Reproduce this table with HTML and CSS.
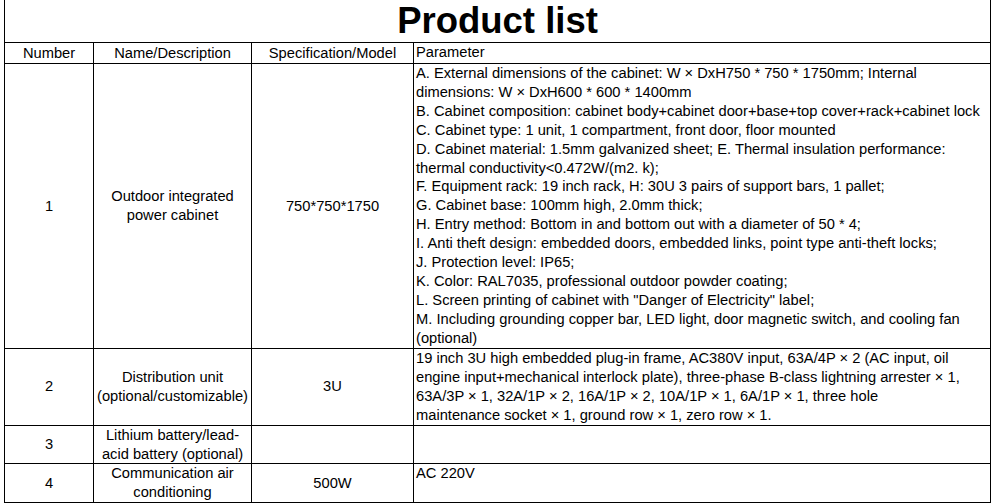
FILE: index.html
```html
<!DOCTYPE html>
<html>
<head>
<meta charset="utf-8">
<link rel="stylesheet" href="styles.css">
</head>
<body>
<table class="sheet">
  <colgroup>
    <col class="c-num">
    <col class="c-name">
    <col class="c-spec">
    <col class="c-param">
  </colgroup>
  <tr class="r-title"><td colspan="4" class="title">Product list</td></tr>
  <tr class="r-head">
    <td class="ctr">Number</td>
    <td class="ctr">Name/Description</td>
    <td class="ctr">Specification/Model</td>
    <td class="param">Parameter</td>
  </tr>
  <tr class="r-1">
    <td class="ctr">1</td>
    <td class="ctr">Outdoor integrated<br>power cabinet</td>
    <td class="ctr">750*750*1750</td>
    <td class="param">A. External dimensions of the cabinet: W × DxH750 * 750 * 1750mm; Internal<br>dimensions: W × DxH600 * 600 * 1400mm<br>B. Cabinet composition: cabinet body+cabinet door+base+top cover+rack+cabinet lock<br>C. Cabinet type: 1 unit, 1 compartment, front door, floor mounted<br>D. Cabinet material: 1.5mm galvanized sheet; E. Thermal insulation performance:<br>thermal conductivity&lt;0.472W/(m2. k);<br>F. Equipment rack: 19 inch rack, H: 30U 3 pairs of support bars, 1 pallet;<br>G. Cabinet base: 100mm high, 2.0mm thick;<br>H. Entry method: Bottom in and bottom out with a diameter of 50 * 4;<br>I. Anti theft design: embedded doors, embedded links, point type anti-theft locks;<br>J. Protection level: IP65;<br>K. Color: RAL7035, professional outdoor powder coating;<br>L. Screen printing of cabinet with "Danger of Electricity" label;<br>M. Including grounding copper bar, LED light, door magnetic switch, and cooling fan<br>(optional)</td>
  </tr>
  <tr class="r-2">
    <td class="ctr">2</td>
    <td class="ctr">Distribution unit<br>(optional/customizable)</td>
    <td class="ctr">3U</td>
    <td class="param">19 inch 3U high embedded plug-in frame, AC380V input, 63A/4P × 2 (AC input, oil<br>engine input+mechanical interlock plate), three-phase B-class lightning arrester × 1,<br>63A/3P × 1, 32A/1P × 2, 16A/1P × 2, 10A/1P × 1, 6A/1P × 1, three hole<br>maintenance socket × 1, ground row × 1, zero row × 1.</td>
  </tr>
  <tr class="r-3">
    <td class="ctr">3</td>
    <td class="ctr">Lithium battery/lead-<br>acid battery (optional)</td>
    <td class="ctr"></td>
    <td class="param"></td>
  </tr>
  <tr class="r-4">
    <td class="ctr">4</td>
    <td class="ctr">Communication air<br>conditioning</td>
    <td class="ctr">500W</td>
    <td class="param">AC 220V</td>
  </tr>
</table>
</body>
</html>
```

FILE: styles.css
```css
html, body {
  margin: 0;
  padding: 0;
  background: #ffffff;
}
body {
  font-family: "Liberation Sans", Arial, sans-serif;
  font-size: 14.7px;
  color: #000000;
}
.sheet {
  margin-left: 4px;
  border-collapse: collapse;
  table-layout: fixed;
  width: 987px;
}
.c-num { width: 89px; }
.c-name { width: 158px; }
.c-spec { width: 162px; }
.c-param { width: 577px; }
.sheet td {
  border: 1px solid #000000;
  padding: 0 2px;
  line-height: 18.9px;
  white-space: nowrap;
  overflow: hidden;
}
.sheet td.title {
  border-top: none;
  text-align: center;
  font-weight: bold;
  font-size: 36.5px;
  line-height: 42px;
  height: 42px;
  padding: 0;
}
.ctr {
  text-align: center;
  vertical-align: middle;
}
.param {
  text-align: left;
  vertical-align: top;
}
.r-head td { height: 20px; }
.r-1 td { height: 284px; }
.r-2 td { height: 75px; }
.r-3 td { height: 37px; }
.r-4 td { height: 37px; }
```
